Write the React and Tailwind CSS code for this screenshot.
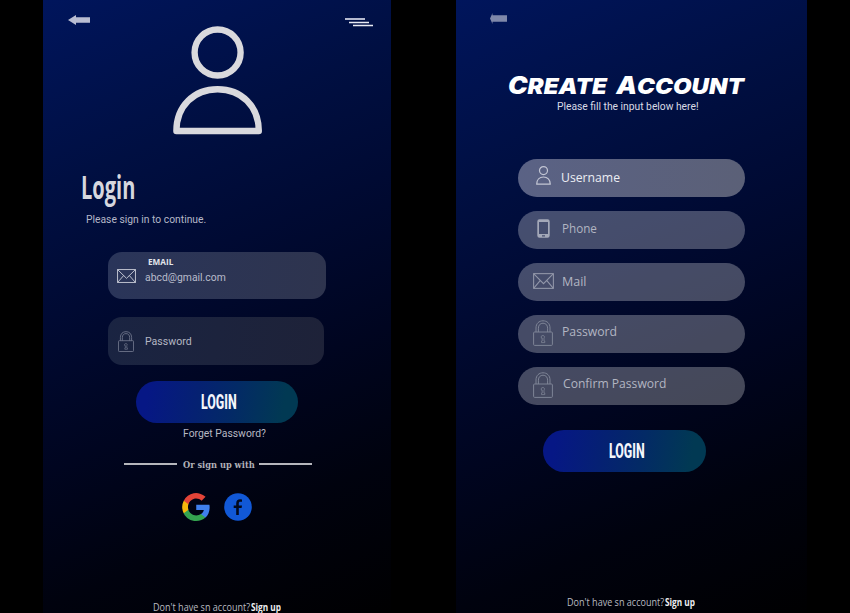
import { useLayoutEffect, useRef, useState } from "react";

// Text condensed or widened so that it fills the width of its box.
function Fit({ box, className, children }) {
  const ref = useRef(null);
  const [scale, setScale] = useState(1);
  useLayoutEffect(() => {
    const inner = ref.current;
    setScale(inner.parentElement.clientWidth / inner.offsetWidth);
  }, []);
  return (
    <div className={`shrink-0 whitespace-nowrap ${box}`}>
      <span
        ref={ref}
        className={`inline-block origin-left align-top ${className}`}
        style={{ transform: `scaleX(${scale})` }}
      >
        {children}
      </span>
    </div>
  );
}

const roboto = "font-['Roboto',sans-serif]";
const openSans = "font-['Open_Sans',sans-serif]";

function UserIcon({ className }) {
  return (
    <svg viewBox="0 0 15 19" className={className} fill="none" stroke="#c3c6d4" strokeWidth="1.2" strokeLinejoin="round">
      <circle cx="7.5" cy="4.6" r="4" />
      <path d="M.7 18.2C.7 13.6 3.6 11 7.500 11s6.800 2.600 6.800 7.200z" />
    </svg>
  );
}

function MailIcon({ className, stroke }) {
  return (
    <svg viewBox="0 0 20 15" preserveAspectRatio="none" className={className} fill="none" stroke={stroke} strokeWidth="1">
      <rect x=".6" y=".6" width="18.800" height="13.800" />
      <path d="M.8.8 10 10 19.200.8M.8 14.200 7 7M19.200 14.200 13 7" />
    </svg>
  );
}

function LockIcon({ className, stroke }) {
  return (
    <svg viewBox="0 0 20 26" preserveAspectRatio="none" className={className} fill="none" stroke={stroke} strokeWidth="1">
      <rect x=".6" y="12" width="18.800" height="13.400" rx="1" />
      <path d="M3 12V8C3 3.400 6 .8 10 .8S17 3.400 17 8v4M5.400 12V8.200C5.400 5 7.300 3.200 10 3.200s4.600 1.800 4.600 5V12" />
      <path d="M8.300 16.200c.6-.9 2.900-.9 3.200.4.100.8-.3 1.100-.5 1.500v3h.8v1.500H8.500v-1.500h.7v-3h-.9z" strokeWidth=".8" />
    </svg>
  );
}

function PhoneIcon({ className }) {
  return (
    <svg viewBox="0 0 13 19" className={className}>
      <path
        fill="#a3a8b8"
        fillRule="evenodd"
        d="M2.500.3h8A2.200 2.200 0 0 1 12.700 2.500v14a2.200 2.200 0 0 1-2.200 2.200h-8A2.200 2.200 0 0 1 .3 16.500v-14A2.200 2.200 0 0 1 2.500.3zM2 3v12h9V3zM5 16.300v1.200h3v-1.200z"
      />
    </svg>
  );
}

function GoogleLogo({ className }) {
  return (
    <svg viewBox="0 0 24 24" className={className}>
      <path fill="#3f7fec" d="M23.700 12.300c0-.8-.1-1.600-.2-2.300H12.200v4.500h6.500c-.3 1.500-1.100 2.700-2.400 3.600v3h3.900c2.200-2.100 3.500-5.100 3.500-8.800z" />
      <path fill="#34a350" d="M12.200 24c3.200 0 5.900-1.100 7.900-2.900l-3.900-3c-1.100.7-2.400 1.200-4 1.200-3.100 0-5.800-2.100-6.700-4.900h-4v3.100C3.500 21.400 7.500 24 12.200 24z" />
      <path fill="#f7b80b" d="M5.500 14.300a7.100 7.100 0 0 1 0-4.600V6.600h-4a12 12 0 0 0 0 10.800z" />
      <path fill="#e34438" d="M12.200 4.800c1.800 0 3.300.6 4.600 1.800l3.400-3.400A12 12 0 0 0 1.500 6.600l4 3.100c.9-2.800 3.600-4.900 6.700-4.900z" />
    </svg>
  );
}

function LoginButton({ className }) {
  return (
    <button
      className={`flex h-[42px] items-center rounded-[21px] bg-[linear-gradient(100deg,#061785_8%,#052172_38%,#032a66_60%,#013953_90%)] ${className}`}
    >
      <Fit box="h-[22px] w-[36px]" className={`${roboto} text-[21px] leading-[22px] font-extrabold text-[#f4f6fb]`}>
        LOGIN
      </Fit>
    </button>
  );
}

function Footer({ className }) {
  return (
    <div className={`flex h-3 gap-px ${className}`}>
      <Fit box="h-3 w-[97px]" className={`${openSans} text-[11px] leading-[12px] text-[#b9bac0]`}>
        Don't have sn account?
      </Fit>
      <Fit box="h-3 w-[30px]" className={`${openSans} text-[11px] leading-[12px] font-bold text-[#ededf0]`}>
        Sign up
      </Fit>
    </div>
  );
}

const panel =
  "flex h-[613px] shrink-0 flex-col items-start overflow-hidden bg-[linear-gradient(157deg,#00155c_0%,#000f42_25%,#000a33_42%,#000520_62%,#00020e_80%,#000001_100%)]";

function LoginScreen() {
  return (
    <section className={`w-[348px] ${panel}`}>
      <header className="flex h-[26px] w-full shrink-0 items-start justify-between pt-[15px] pr-[18px] pl-[25px]">
        <svg viewBox="0 0 22 10" className="h-[10px] w-[22px]" fill="#b9bdd2">
          <path d="M0 5 8 0v2.300h14v5.400H8V10z" />
        </svg>
        <svg viewBox="0 0 28 10" className="mt-[2px] h-[10px] w-[28px]">
          <path d="M0 2h20" stroke="#b4b9cf" strokeWidth="2" />
          <path d="M4 5.500h20M8 8.500h20" stroke="#e9ebf4" strokeWidth="1.700" />
        </svg>
      </header>
      <svg viewBox="0 0 90 109" className="ml-[130px] h-[109px] w-[90px] shrink-0" fill="none" stroke="#d9d9dd" strokeWidth="6.400" strokeLinejoin="round">
        <circle cx="44.600" cy="26.500" r="23" />
        <path d="M3.400 105C3.400 80 21 63.200 44.600 63.200S85.800 80 85.800 105z" />
      </svg>
      <Fit box="mt-[31px] ml-[38px] h-10 w-[54px]" className={`${openSans} text-[33px] leading-[41px] font-bold text-[#d6d7de]`}>
        Login
      </Fit>
      <Fit box="mt-[5px] ml-[43px] h-4 w-[120px]" className={`${roboto} text-[11px] leading-[18px] text-[#b5b8c8]`}>
        Please sign in to continue.
      </Fit>
      <div className="mt-[25px] ml-[65px] flex h-[47px] w-[218px] shrink-0 items-start rounded-[14px] bg-[linear-gradient(100deg,#2a355a,#2e344e)] pl-[9px]">
        <MailIcon className="mt-[17px] h-[14px] w-[19px]" stroke="#c5c8d4" />
        <div className="ml-[9px] flex flex-col pt-[5px]">
          <Fit box="ml-[3px] h-[10px] w-[25px]" className={`${openSans} text-[8.5px] leading-[10px] font-bold text-[#e3e5ec]`}>
            EMAIL
          </Fit>
          <Fit box="mt-[2px] h-4 w-[81px]" className={`${roboto} text-[11px] leading-[18px] text-[#b9bccb]`}>
            abcd@gmail.com
          </Fit>
        </div>
      </div>
      <div className="mt-[18px] ml-[65px] flex h-[48px] w-[216px] shrink-0 items-center rounded-[14px] bg-[linear-gradient(100deg,#1a2442,#1e2238)] pl-[10px]">
        <LockIcon className="h-[21px] w-[16px]" stroke="#777d92" />
        <Fit box="ml-[11px] h-4 w-[47px]" className={`${roboto} text-[11px] leading-[18px] text-[#b4b7c3]`}>
          Password
        </Fit>
      </div>
      <LoginButton className="mt-4 ml-[93px] w-[162px] shrink-0 pl-[65px]" />
      <Fit box="mt-[2px] ml-[140px] h-4 w-[83px]" className={`${roboto} text-[11px] leading-[18px] text-[#b7b9c3]`}>
        Forget Password?
      </Fit>
      <div className="mt-[15px] ml-[81px] flex h-4 shrink-0 items-center">
        <div className="h-[2px] w-[53px] bg-[#b5b6bc]" />
        <Fit box="ml-[6px] h-4 w-[72px]" className="font-['DejaVu_Serif',serif] text-[10px] leading-[17px] font-bold text-[#b0b1b8]">
          Or sign up with
        </Fit>
        <div className="ml-1 h-[2px] w-[53px] bg-[#b5b6bc]" />
      </div>
      <div className="mt-5 ml-[139px] flex h-[30px] shrink-0 items-center gap-[14px]">
        <GoogleLogo className="size-[28px]" />
        <svg viewBox="0 0 28 28" className="size-[28px]">
          <circle cx="14" cy="14" r="13.800" fill="#1158d6" />
          <path
            d="M12.200 22v-7H9.700v-2.600h2.500v-2c0-2.800 1.500-4.100 3.900-4.100l1.900.1V8.700h-1.600c-1.300 0-1.600.6-1.600 1.600v2.100H18l-.4 2.600h-2.800v7z"
            fill="#02091c"
          />
        </svg>
      </div>
      <Footer className="mt-[79px] ml-[110px]" />
    </section>
  );
}

function Field({ icon, label, box, bright }) {
  return (
    <div className={`flex h-[38px] w-[227px] items-start rounded-[19px] ${bright ? "bg-[linear-gradient(100deg,#5a6285,#5b6077)]" : "bg-white/27"}`}>
      <div className="flex h-[38px] w-[43px] shrink-0 items-start pl-[15px]">{icon}</div>
      <Fit box={box} className={`${openSans} text-[12px] leading-[19px] font-medium ${bright ? "text-[#eceef4]" : "text-[#b2b5c2]"}`}>
        {label}
      </Fit>
    </div>
  );
}

function CreateAccountScreen() {
  return (
    <section className={`w-[351px] ${panel}`}>
      <header className="flex h-[26px] shrink-0 items-start pt-[13px] pl-[34px]">
        <svg viewBox="0 0 17 11" className="h-[11px] w-[17px]" fill="#7f88aa">
          <path d="M0 5.500 2.500 0v2.300H17v6.400H2.500V11z" />
        </svg>
      </header>
      <Fit
        box="mt-[44px] ml-[52px] h-[30px] w-[236px]"
        className="font-['Inter',sans-serif] text-[22px] leading-[31px] font-black text-white uppercase italic [word-spacing:4px]"
      >
        <span className="text-[24px]">C</span>reate <span className="text-[24px]">A</span>ccount
      </Fit>
      <Fit box="mt-[-2px] ml-[101px] h-4 w-[142px]" className={`${roboto} text-[11px] leading-[18px] text-[#d9dbe5]`}>
        Please fill the input below here!
      </Fit>
      <div className="mt-[45px] ml-[62px] flex shrink-0 flex-col gap-[14px]">
        <Field bright label="Username" box="mt-[9px] h-[18px] w-[59px]" icon={<UserIcon className="mt-[7px] ml-[3px] h-[19px] w-[15px]" />} />
        <Field label="Phone" box="mt-[8px] ml-px h-[18px] w-[35px]" icon={<PhoneIcon className="mt-[8px] ml-1 h-[19px] w-[13px]" />} />
        <Field label="Mail" box="mt-[9px] ml-px h-[18px] w-[25px]" icon={<MailIcon className="mt-[10px] h-[16px] w-[21px]" stroke="#9297a9" />} />
        <Field label="Password" box="mt-[7px] ml-px h-[18px] w-[55px]" icon={<LockIcon className="mt-[5px] h-[26px] w-[20px]" stroke="#7e8496" />} />
        <Field label="Confirm Password" box="mt-[7px] ml-[2px] h-[18px] w-[103px]" icon={<LockIcon className="mt-[5px] h-[26px] w-[20px]" stroke="#7e8496" />} />
      </div>
      <LoginButton className="mt-[25px] ml-[87px] w-[163px] shrink-0 pl-[66px]" />
      <Footer className="mt-[124px] ml-[111px]" />
    </section>
  );
}

export default function App() {
  return (
    <main className="flex h-[613px] w-[850px] gap-[65px] overflow-hidden bg-black pl-[43px]">
      <LoginScreen />
      <CreateAccountScreen />
    </main>
  );
}
